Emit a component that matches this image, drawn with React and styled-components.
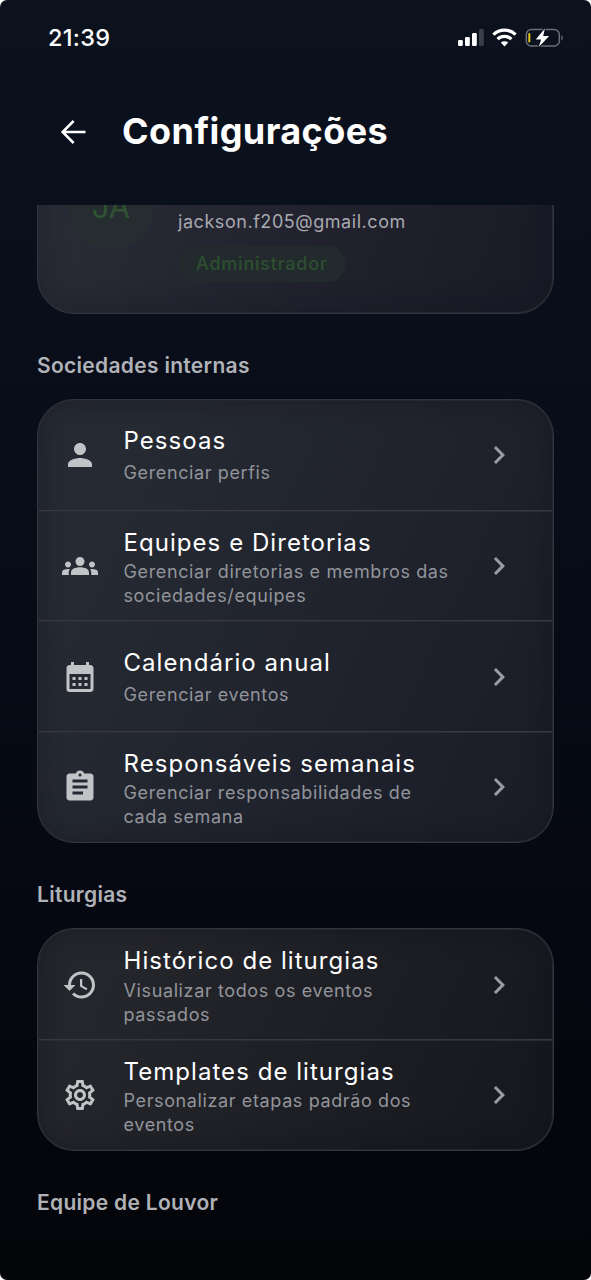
import React from "react";
import styled, { createGlobalStyle } from "styled-components";
import {
  MdPerson,
  MdGroups,
  MdCalendarMonth,
  MdAssignment,
  MdHistory,
  MdOutlineSettings,
  MdChevronRight,
} from "react-icons/md";

const sections = [
  {
    title: "Sociedades internas",
    tint: ["#262a33", "#1a1d27"],
    items: [
      { icon: MdPerson, title: "Pessoas", text: "Gerenciar perfis" },
      {
        icon: MdGroups,
        title: "Equipes e Diretorias",
        text: "Gerenciar diretorias e membros das\nsociedades/equipes",
      },
      {
        icon: MdCalendarMonth,
        title: "Calendário anual",
        text: "Gerenciar eventos",
      },
      {
        icon: MdAssignment,
        title: "Responsáveis semanais",
        text: "Gerenciar responsabilidades de\ncada semana",
      },
    ],
  },
  {
    title: "Liturgias",
    tint: ["#25262b", "#16181e"],
    items: [
      {
        icon: MdHistory,
        title: "Histórico de liturgias",
        text: "Visualizar todos os eventos\npassados",
      },
      {
        icon: MdOutlineSettings,
        title: "Templates de liturgias",
        text: "Personalizar etapas padrão dos\neventos",
      },
    ],
  },
  { title: "Equipe de Louvor", items: [] },
];

function StatusIcons() {
  return (
    <svg width="106" height="20" viewBox="0 0 106 20">
      <g fill="#fff">
        <rect x="0" y="12" width="4.8" height="6" rx="1.2" />
        <rect x="7" y="9" width="4.8" height="9" rx="1.2" />
        <rect x="14" y="5" width="4.8" height="13" rx="1.2" />
        <rect x="21" y="1" width="4.8" height="17" rx="1.2" fill="#3b3d47" />
      </g>
      <g fill="none" stroke="#fff" strokeWidth="3.3">
        <path d="M35.4 6.6a16.2 16.2 0 0 1 22.2 0" />
        <path d="M39.6 11.1a10 10 0 0 1 13.8 0" />
      </g>
      <path d="M46.5 18.4l-3.7-3.8a5.4 5.4 0 0 1 7.4 0z" fill="#fff" />
      <rect
        x="68.3"
        y="1.5"
        width="33"
        height="16.4"
        rx="5"
        fill="none"
        stroke="#6b6e76"
        strokeWidth="1.5"
      />
      <path d="M103.4 7v5.6c1.9-.9 1.9-4.7 0-5.6z" fill="#6b6e76" />
      <rect x="70.3" y="5" width="2" height="9.4" rx="1" fill="#e3c51c" />
      <path
        d="M86.9.5l-9.2 11h5.4L80.8 19l10.4-11h-6z"
        fill="#fff"
        stroke="#0a0f1a"
        strokeWidth="2"
        paintOrder="stroke"
      />
    </svg>
  );
}

function BackArrow() {
  return (
    <svg width="26" height="26" viewBox="0 0 26 26">
      <path
        d="M25.5 13H3M13.6 2L2.6 13l11 11"
        fill="none"
        stroke="#fff"
        strokeWidth="2.5"
      />
    </svg>
  );
}

function SettingsItem({ icon: Icon, title, text }) {
  return (
    <Item>
      <IconBox>
        <Icon size={36} />
      </IconBox>
      <ItemText $twoLines={text.includes("\n")}>
        <ItemTitle>{title}</ItemTitle>
        <ItemSubtitle>{text}</ItemSubtitle>
      </ItemText>
      <MdChevronRight size={36} color="#9a9ca3" />
    </Item>
  );
}

function App() {
  return (
    <Screen>
      <GlobalStyle />
      <StatusBar>
        <Time>21:39</Time>
        <StatusIcons />
      </StatusBar>
      <Header>
        <BackArrow />
        <PageTitle>Configurações</PageTitle>
      </Header>
      <Content>
        <Profile>
          <Avatar>JA</Avatar>
          <ProfileInfo>
            <Email>jackson.f205@gmail.com</Email>
            <Badge>Administrador</Badge>
          </ProfileInfo>
        </Profile>
        {sections.map((section) => (
          <section key={section.title}>
            <SectionTitle>{section.title}</SectionTitle>
            {section.items.length > 0 && (
              <Card $tint={section.tint}>
                {section.items.map((item) => (
                  <SettingsItem key={item.title} {...item} />
                ))}
              </Card>
            )}
          </section>
        ))}
      </Content>
    </Screen>
  );
}

const GlobalStyle = createGlobalStyle`
  * {
    box-sizing: border-box;
  }
  body {
    margin: 0;
    background: #fff;
    font-family: Inter, "Liberation Sans", sans-serif;
  }
`;

const Screen = styled.div`
  width: 591px;
  height: 1280px;
  display: flex;
  flex-direction: column;
  overflow: hidden;
  border-radius: 7px;
  background: linear-gradient(
    180deg,
    #0b121e 0%,
    #090e1a 25%,
    #060a15 60%,
    #05070f 80%,
    #040509 100%
  );
`;

const StatusBar = styled.div`
  height: 76px;
  padding: 0 27px 1px 48px;
  display: flex;
  align-items: center;
  justify-content: space-between;
  flex-shrink: 0;
`;

const Time = styled.span`
  font-size: 23.5px;
  font-weight: 500;
  letter-spacing: 0.3px;
  color: #fff;
`;

const Header = styled.header`
  height: 129px;
  padding: 0 60px 18px;
  display: flex;
  align-items: center;
  gap: 36px;
  flex-shrink: 0;
`;

const PageTitle = styled.h1`
  margin: 0;
  padding-bottom: 1px;
  font-size: 36px;
  font-weight: 650;
  letter-spacing: 0.43px;
  color: #fff;
`;

const Content = styled.main`
  flex: 1;
  min-height: 0;
  padding: 0 37px;
  overflow: hidden;
`;

const Panel = styled.div`
  border: 1px solid #32353e;
  border-radius: 37px;
  overflow: hidden;
`;

const Profile = styled(Panel)`
  height: 215px;
  margin-top: -106px;
  padding: 0 30px;
  display: flex;
  align-items: center;
  gap: 24px;
  background: linear-gradient(110deg, #292b36 10%, #20212d 60%, #181a26 100%);
  box-shadow: inset 0 0 0 1px #262933, inset 0 0 30px rgba(10, 13, 24, 0.3);
`;

const Avatar = styled.div`
  width: 86px;
  height: 86px;
  border-radius: 50%;
  display: flex;
  align-items: center;
  justify-content: center;
  flex-shrink: 0;
  font-size: 31px;
  color: #2f5233;
  background: #262d31;
`;

const ProfileInfo = styled.div`
  padding-top: 78px;
  display: flex;
  flex-direction: column;
  align-items: flex-start;
  gap: 12px;
`;

const Email = styled.span`
  font-size: 18px;
  line-height: 24px;
  letter-spacing: 0.55px;
  color: #a8a9b0;
`;

const Badge = styled.span`
  height: 36px;
  padding: 0 18px;
  border-radius: 18px;
  display: flex;
  align-items: center;
  font-size: 18px;
  font-weight: 500;
  letter-spacing: 0.78px;
  color: #2d4f30;
  background: #222a2e;
`;

const SectionTitle = styled.h2`
  margin: 0;
  padding: 38px 0 19px;
  font-size: 21px;
  line-height: 28px;
  font-weight: 600;
  letter-spacing: 0.3px;
  color: #b0b2b8;
`;

const Card = styled(Panel)`
  padding: 1px;
  background: linear-gradient(
    115deg,
    ${(props) => props.$tint[0]} 15%,
    ${(props) => props.$tint[1]} 95%
  );
  box-shadow: inset 0 0 0 1px #242730, inset 0 0 24px rgba(8, 12, 24, 0.35);
`;

const Item = styled.div`
  height: 110.75px;
  padding: 0 35.5px 0 23px;
  display: flex;
  align-items: center;

  &:first-child {
    height: 108.5px;
  }
  &:last-child {
    height: 110.25px;
  }
  & + & {
    padding-top: 1px;
    border-top: 1px solid #363943;
    box-shadow: inset 0 1px #292c36;
  }
`;

const IconBox = styled.div`
  width: 61.5px;
  display: flex;
  color: #c2c3c7;
`;

const ItemText = styled.div`
  flex: 1;
  display: flex;
  flex-direction: column;
  gap: ${(props) => (props.$twoLines ? 1.5 : 4)}px;
  padding-top: ${(props) => (props.$twoLines ? 3 : 0)}px;
`;

const ItemTitle = styled.span`
  font-size: 24px;
  line-height: 32px;
  letter-spacing: 1.05px;
  color: #fff;
`;

const ItemSubtitle = styled.span`
  font-size: 18px;
  line-height: 24px;
  letter-spacing: 0.62px;
  white-space: pre-line;
  color: #92949b;
`;

export default App;
